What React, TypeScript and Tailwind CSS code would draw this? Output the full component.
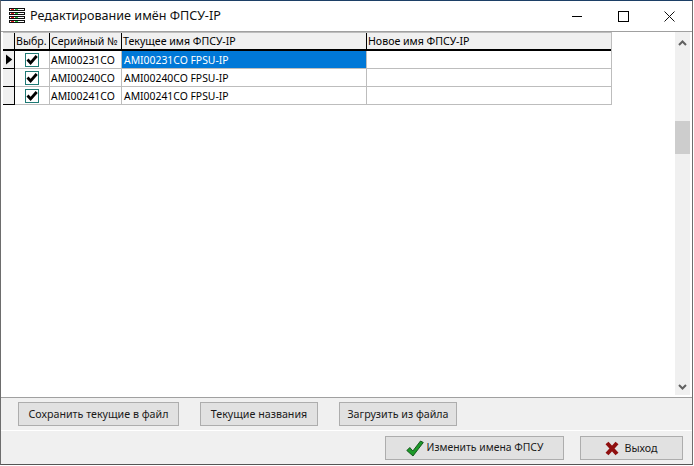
import React from "react";

const rows = [
  { sn: "AMI00231CO", name: "AMI00231CO FPSU-IP", active: true },
  { sn: "AMI00240CO", name: "AMI00240CO FPSU-IP", active: false },
  { sn: "AMI00241CO", name: "AMI00241CO FPSU-IP", active: false },
];

function Check() {
  return (
    <span className="w-[14px] h-[14px] border border-[#1f7a75] bg-white flex items-center justify-center">
      <svg width="12" height="12" viewBox="0 0 12 12">
        <path d="M1.5 5.5 L4.6 9 L10.7 2" fill="none" stroke="#000" strokeWidth="2.8" />
      </svg>
    </span>
  );
}

function Head({ w, children }: { w: string; children?: React.ReactNode }) {
  return (
    <div className={`${w} h-[18px] shrink-0 bg-[#f0f0f0] border-r border-b-2 border-black pl-[1px] leading-[17px] text-[10.6px] whitespace-nowrap overflow-hidden`}>
      {children}
    </div>
  );
}

function Btn({ w, children }: { w: string; children: React.ReactNode }) {
  return (
    <div className={`${w} h-[24px] shrink-0 bg-[#e1e1e1] border border-[#adadad] flex items-center justify-center text-[10.7px] text-[#1a1a1a]`}>
      {children}
    </div>
  );
}

export default function App() {
  return (
    <div className="w-[694px] h-[466px] bg-white overflow-hidden">
      <div className="w-[693px] h-[465px] bg-white border-x border-b border-[#6d6d6d] border-b-[#555555] border-t border-t-[#1c3f66] flex flex-col text-[10.4px] text-black font-['Noto_Sans',sans-serif]">
        <div className="h-[31px] shrink-0 flex items-center border-b border-[#a0a0a0]">
          <svg className="ml-[8px]" width="16" height="16" viewBox="0 0 16 16">
            {[0, 4, 8, 12].map((y) => (
              <g key={y}>
                <rect x="0" y={y} width="16" height="3" fill="#111" />
                <rect x="1" y={y + 1} width="14" height="1" fill="#fff" />
                <rect x="2" y={y + 1} width="3" height="1" fill="#e02020" />
                <rect x="6" y={y + 1} width="3" height="1" fill="#20c040" />
              </g>
            ))}
          </svg>
          <span className="ml-[5px] text-[12.6px] text-[#111]">Редактирование имён ФПСУ-IP</span>
          <div className="ml-auto flex items-center">
            <div className="w-[46px] flex justify-center">
              <div className="w-[10px] h-[1px] bg-black" />
            </div>
            <div className="w-[46px] flex justify-center">
              <div className="w-[11px] h-[11px] border border-black" />
            </div>
            <div className="w-[46px] flex justify-center">
              <svg width="11" height="11" viewBox="0 0 11 11">
                <path d="M0.5 0.5 L10.5 10.5 M10.5 0.5 L0.5 10.5" stroke="#111" strokeWidth="1" />
              </svg>
            </div>
          </div>
        </div>

        <div className="flex-1 flex min-h-0 border-b border-[#a0a0a0]">
          <div className="flex-1 pl-[2px]">
            <div className="w-[609px] border-r border-[#bdbdbd] border-t border-t-[#bdbdbd]">
              <div className="flex">
                <Head w="w-[12px]" />
                <Head w="w-[35px]">Выбр.</Head>
                <Head w="w-[72px]">Серийный №</Head>
                <Head w="w-[245px]">Текущее имя ФПСУ-IP</Head>
                <div className="flex-1 h-[18px] bg-[#f0f0f0] border-b-2 border-black pl-[1px] leading-[17px] text-[10.6px] whitespace-nowrap">Новое имя ФПСУ-IP</div>
              </div>
              {rows.map((r) => (
                <div key={r.sn} className="flex h-[18px] border-b border-[#bdbdbd]">
                  <div className="w-[12px] h-[18px] shrink-0 bg-[#f0f0f0] border-r border-b border-black flex items-center">
                    {r.active && (
                      <svg width="9" height="11" viewBox="0 0 9 11" className="ml-[3px]">
                        <path d="M0 0 L7 5.5 L0 11 Z" fill="#000" />
                      </svg>
                    )}
                  </div>
                  <div className="w-[35px] shrink-0 border-r border-[#bdbdbd] flex items-center justify-center">
                    <Check />
                  </div>
                  <div className="w-[72px] shrink-0 border-r border-[#bdbdbd] pl-[1px] leading-[18px]">{r.sn}</div>
                  <div className={`w-[245px] shrink-0 border-r border-[#bdbdbd] pl-[2px] leading-[18px] ${r.active ? "bg-[#0078d7] text-white" : ""}`}>{r.name}</div>
                  <div className="flex-1" />
                </div>
              ))}
            </div>
          </div>
          <div className="w-[15px] mr-[2px] mb-[2px] shrink-0 bg-[#f0f0f0] flex flex-col items-center pt-[8px] pb-[5px]">
            <svg width="9" height="6" viewBox="0 0 9 6" className="shrink-0">
              <path d="M1 5 L4.5 1.5 L8 5" fill="none" stroke="#606060" strokeWidth="2" />
            </svg>
            <div className="w-full h-[33px] mt-[75px] bg-[#cdcdcd] shrink-0" />
            <svg width="9" height="6" viewBox="0 0 9 6" className="mt-auto shrink-0">
              <path d="M1 1 L4.5 4.5 L8 1" fill="none" stroke="#606060" strokeWidth="2" />
            </svg>
          </div>
        </div>

        <div className="h-[33px] shrink-0 bg-[#f0f0f0] border-b border-white flex items-start pt-[4px] pl-[17px] gap-[21px]">
          <Btn w="w-[161px]">Сохранить текущие в файл</Btn>
          <Btn w="w-[118px]">Текущие названия</Btn>
          <Btn w="w-[118px]">Загрузить из файла</Btn>
        </div>

        <div className="h-[33px] shrink-0 bg-[#f0f0f0] flex items-start pt-[5px] justify-end pr-[9px] gap-[16px]">
          <Btn w="w-[179px]">
            <svg width="18" height="17" viewBox="0 0 18 17" className="mr-[3px]">
              <path d="M0.8 10.5 L3.8 7.5 L6.8 11 L14.5 1 L17.3 2.5 L7 16 Z" fill="#1d9a2a" stroke="#0d4d14" strokeWidth="0.9" />
            </svg>
            <span className="text-[10.4px]">Изменить имена ФПСУ</span>
          </Btn>
          <Btn w="w-[103px]">
            <svg width="14" height="15" viewBox="0 0 14 15" className="mr-[5px]">
              <path d="M2 2 L12 13 M12 2 L2 13" stroke="#8f0f0f" strokeWidth="4" />
            </svg>
            Выход
          </Btn>
        </div>
      </div>
    </div>
  );
}
